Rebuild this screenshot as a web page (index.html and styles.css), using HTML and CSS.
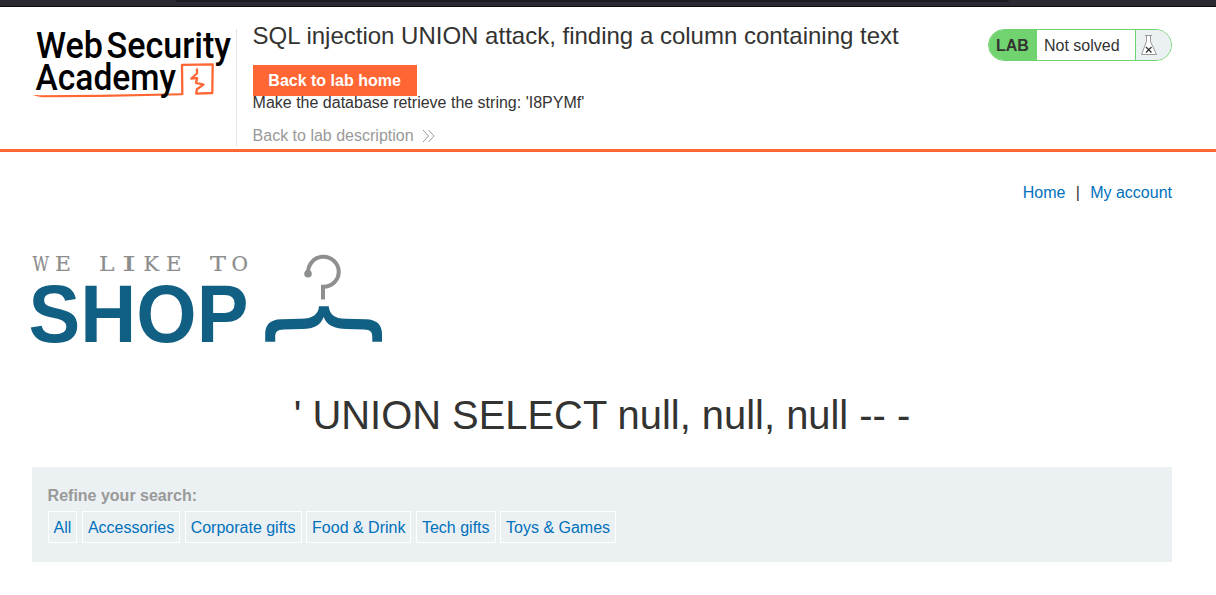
FILE: index.html
```html
<!DOCTYPE html>
<html lang="en">
<head>
<meta charset="utf-8">
<title>SQL injection UNION attack, finding a column containing text</title>
<link rel="stylesheet" href="styles.css">
</head>
<body>
<div class="browser-edge"><div class="browser-field"></div></div>
<header class="lab-header">
  <svg class="academy-logo" width="204" height="80" viewBox="32 24 204 80" role="img" aria-label="Web Security Academy">
    <path class="logo-line" d="M33 95.4 Q36 94.6 40 95.2 L100 94.8 L182 93.2 L182 95.2 L100 97 L42 97.2 Z"/>
    <path class="logo-box" d="M182.3 95 L182 64.8 L212.7 64.4 L212.3 93 L196.2 93.7 L196.9 89.3 L203.5 84.6 L196 82.9 L197.2 78.2 L191.2 78.5 L197 73.5 L197 68.5"/>
    <text class="logo-type" x="36" y="57.5" textLength="67" lengthAdjust="spacingAndGlyphs">Web</text>
    <text class="logo-type" x="106.5" y="57.5" textLength="124.5" lengthAdjust="spacingAndGlyphs">Security</text>
    <text class="logo-type" x="35.5" y="90" textLength="140.5" lengthAdjust="spacingAndGlyphs">Academy</text>
  </svg>
  <div class="lab-info">
    <h2 class="lab-title">SQL injection UNION attack, finding a column containing text</h2>
    <a class="home-button">Back to lab home</a>
    <p class="hint">Make the database retrieve the string: 'I8PYMf'</p>
    <a class="description-link">Back to lab description
      <svg width="14" height="14" viewBox="0 0 14 14"><path d="M1 1 L6.5 7 L1 13 M6.5 1 L12 7 L6.5 13"/></svg>
    </a>
  </div>
  <div class="lab-status">
    <span class="status-label">LAB</span>
    <span class="status-text">Not solved</span>
    <span class="status-icon">
      <svg width="18" height="22" viewBox="0 0 18 22">
        <path class="flask" d="M5 1.5 H12 M6.5 1.5 V7.5 L1.5 20.5 H16.5 L10.5 7.5 V1.5"/>
        <path class="cross" d="M6 13 L11.5 18.5 M11.5 13 L6 18.5"/>
      </svg>
    </span>
  </div>
</header>
<main class="page">
  <nav class="top-links"><a>Home</a><span>|</span><a>My account</a></nav>
  <svg class="shop-logo" width="360" height="100" viewBox="32 250 360 100" role="img" aria-label="We like to shop">
    <g class="tagline">
      <text x="32.5" y="271" textLength="16.5" lengthAdjust="spacingAndGlyphs">W</text>
      <text x="55" y="271" textLength="16" lengthAdjust="spacingAndGlyphs">E</text>
      <text x="99" y="271" textLength="15.5" lengthAdjust="spacingAndGlyphs">L</text>
      <text x="122" y="271" textLength="14" lengthAdjust="spacingAndGlyphs">I</text>
      <text x="143.5" y="271" textLength="15.5" lengthAdjust="spacingAndGlyphs">K</text>
      <text x="166" y="271" textLength="15.5" lengthAdjust="spacingAndGlyphs">E</text>
      <text x="210" y="271" textLength="16" lengthAdjust="spacingAndGlyphs">T</text>
      <text x="231.5" y="271" textLength="16.5" lengthAdjust="spacingAndGlyphs">O</text>
    </g>
    <text class="shop-word" x="28.5" y="341.7" textLength="220" lengthAdjust="spacingAndGlyphs">SHOP</text>
    <circle class="hook-end" cx="308" cy="273.7" r="3.8"/>
    <path class="hook" d="M308.2 273 A15.3 15 0 1 1 323 286.8 V299.5"/>
    <path class="bar" d="M319 306.2 H328.7 C329.5 314 334 318.6 346 318.8 L366 319.2 C377 319.4 382 325 382 334 V341.7 H372.3 V337 C372.3 331.5 370 329.5 364 329.4 L347 328.9 C334 328.7 327 325.5 323.7 317 C320 325.5 315 328.7 302 328.9 L284 329.4 C277.5 329.5 275.2 331.5 275.2 337 V341.7 H265.2 V334 C265.2 325 270 319.4 281 319.2 L301 318.8 C313 318.6 318.5 314 319 306.2 Z"/>
  </svg>
  <h1 class="query">' UNION SELECT null, null, null -- -</h1>
  <section class="filters">
    <span class="filters-label">Refine your search:</span>
    <div class="filter-list">
      <a>All</a><a>Accessories</a><a>Corporate gifts</a><a>Food &amp; Drink</a><a>Tech gifts</a><a>Toys &amp; Games</a>
    </div>
  </section>
</main>
</body>
</html>
```
FILE: styles.css
```css
* { box-sizing: border-box; }
body { margin: 0; height: 595px; overflow: hidden; background: #fff; color: #333332; font: 16px/18px "Liberation Sans", Arial, sans-serif; }
h1, h2, p { margin: 0; font-weight: 400; }
svg { display: block; overflow: visible; }

.browser-edge { height: 7px; background: #2b2a33; border-bottom: 1px solid #0c0c0d; padding: 0 207px 0 176px; }
.browser-field { height: 2px; background: #1c1b22; border-radius: 0 0 2px 2px; }

.lab-header { display: flex; align-items: flex-start; height: 145px; border-bottom: 3px solid #ff6633; padding: 0 44px 0 32px; }
.academy-logo { margin-top: 17px; flex: none; }
.logo-type { font: 500 37px Roboto, sans-serif; fill: #000; }
.logo-line { fill: #ff6633; }
.logo-box { fill: none; stroke: #ff6633; stroke-width: 2.3; stroke-linejoin: round; }
.lab-info { display: flex; flex-direction: column; align-items: flex-start; flex: 1; height: 117px; margin-top: 22px; border-left: 1px solid #e2e2e2; padding-left: 15.6px; }
.lab-title { font-size: 24px; line-height: 28px; margin-top: -7px; white-space: nowrap; }
.home-button { width: 164px; height: 31px; margin-top: 15px; line-height: 31px; background: #ff6633; color: #fff; font-weight: 700; text-align: center; }
.hint { margin-top: -2px; }
.description-link { display: flex; align-items: center; gap: 8px; margin-top: 15px; color: #999; }
.description-link svg { fill: none; stroke: #999; stroke-width: 1; margin-top: -1px; }

.lab-status { display: flex; width: 184px; height: 32px; margin-top: 22px; border: 1px solid #71d36f; border-radius: 16px; overflow: hidden; line-height: 32px; }
.status-label { width: 48px; padding-left: 7px; background: #71d36f; font-weight: 700; }
.status-text { width: 99px; padding-left: 7px; border-right: 1px solid #71d36f; line-height: 31px; }
.status-icon { flex: 1; padding: 4px 0 0 4px; background: #ebf0f2; }
.flask { fill: #fff; stroke: #999; }
.cross { fill: none; stroke: #333332; stroke-width: 1.3; }

.page { padding: 32px 44px 0 32px; }
.top-links { display: flex; justify-content: flex-end; gap: 10.3px; }
.top-links a, .filter-list a { color: #0071bc; }
.shop-logo { margin-top: 48px; }
.tagline { font: 21px "DejaVu Serif", serif; fill: #8d8d8d; stroke: #8d8d8d; stroke-width: 0.2; }
.shop-word { font: 700 81px "Liberation Sans", Arial, sans-serif; fill: #125f84; }
.hook { fill: none; stroke: #8d8f90; stroke-width: 4; }
.hook-end { fill: #8d8f90; }
.bar { fill: #125f84; }
.query { margin-top: 42px; font-size: 39.9px; line-height: 46px; text-align: center; }
.filters { height: 95px; margin-top: 29px; padding: 20px 15.6px 0; background: #ebf0f2; }
.filters-label { display: block; color: #999; font-weight: 700; }
.filter-list { display: flex; gap: 4.5px; margin-top: 6px; }
.filter-list a { height: 32px; padding: 1px 5px 0; border: 1px solid #fff; line-height: 30px; }
```
